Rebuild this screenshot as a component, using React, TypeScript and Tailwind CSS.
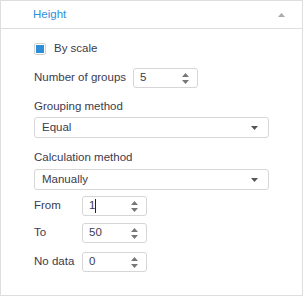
const Spin = () => (
  <div className="flex flex-col items-center gap-[3px] pr-2">
    <svg width="7" height="4" viewBox="0 0 7 4">
      <path d="M0 4 L3.5 0 L7 4 Z" fill="#777" />
    </svg>
    <svg width="7" height="4" viewBox="0 0 7 4">
      <path d="M0 0 L3.5 4 L7 0 Z" fill="#777" />
    </svg>
  </div>
);

const NumInput = ({ value, caret }: { value: string; caret?: boolean }) => (
  <div className="w-[65px] h-[20px] border border-[#d6d6d6] rounded-[3px] bg-white flex items-center justify-between pl-[6px]">
    <span className="flex items-center">
      {value}
      {caret && <span className="inline-block w-px h-[14px] bg-[#222]" />}
    </span>
    <Spin />
  </div>
);

const Select = ({ value }: { value: string }) => (
  <div className="w-[235px] h-[21px] border border-[#d6d6d6] rounded-[3px] bg-white flex items-center justify-between pl-[7px] pr-[10px]">
    <span>{value}</span>
    <svg width="7" height="4" viewBox="0 0 7 4">
      <path d="M0 0 L3.5 4 L7 0 Z" fill="#555" />
    </svg>
  </div>
);

const App = function () {
  return (
    <div className="w-[304px] h-[297px] bg-white font-['Liberation_Sans',Arial,sans-serif] text-[11.5px] text-[#3b3b4f]">
      <div className="w-[303px] h-[296px] border border-[#dedede] flex flex-col">
        <div className="h-[28px] border-b border-[#dedede] flex items-center justify-between pl-[32px] pr-[17px]">
          <span className="text-[#2e8fd8]">Height</span>
          <svg width="7" height="4" viewBox="0 0 7 4">
            <path d="M0 4 L3.5 0 L7 4 Z" fill="#aaa" />
          </svg>
        </div>

        <div className="flex flex-col pl-[33px] pt-[13px]">
          <label className="flex items-center gap-[8px] h-[14px]">
            <span className="w-[12px] h-[12px] border border-[#d0d0d0] rounded-[2px] flex items-center justify-center">
              <span className="w-[8px] h-[8px] bg-[#2b8ed6]" />
            </span>
            <span>By scale</span>
          </label>

          <div className="flex items-center mt-[12px]">
            <span className="w-[99px]">Number of groups</span>
            <NumInput value="5" />
          </div>

          <span className="mt-[11px] leading-[14px]">Grouping method</span>
          <div className="mt-[4px]">
            <Select value="Equal" />
          </div>

          <span className="mt-[12px] leading-[14px]">Calculation method</span>
          <div className="mt-[5px]">
            <Select value="Manually" />
          </div>

          <div className="flex items-center mt-[6px]">
            <span className="w-[48px]">From</span>
            <NumInput value="1" caret />
          </div>
          <div className="flex items-center mt-[7px]">
            <span className="w-[48px]">To</span>
            <NumInput value="50" />
          </div>
          <div className="flex items-center mt-[9px]">
            <span className="w-[48px]">No data</span>
            <NumInput value="0" />
          </div>
        </div>
      </div>
    </div>
  );
};

export default App;
